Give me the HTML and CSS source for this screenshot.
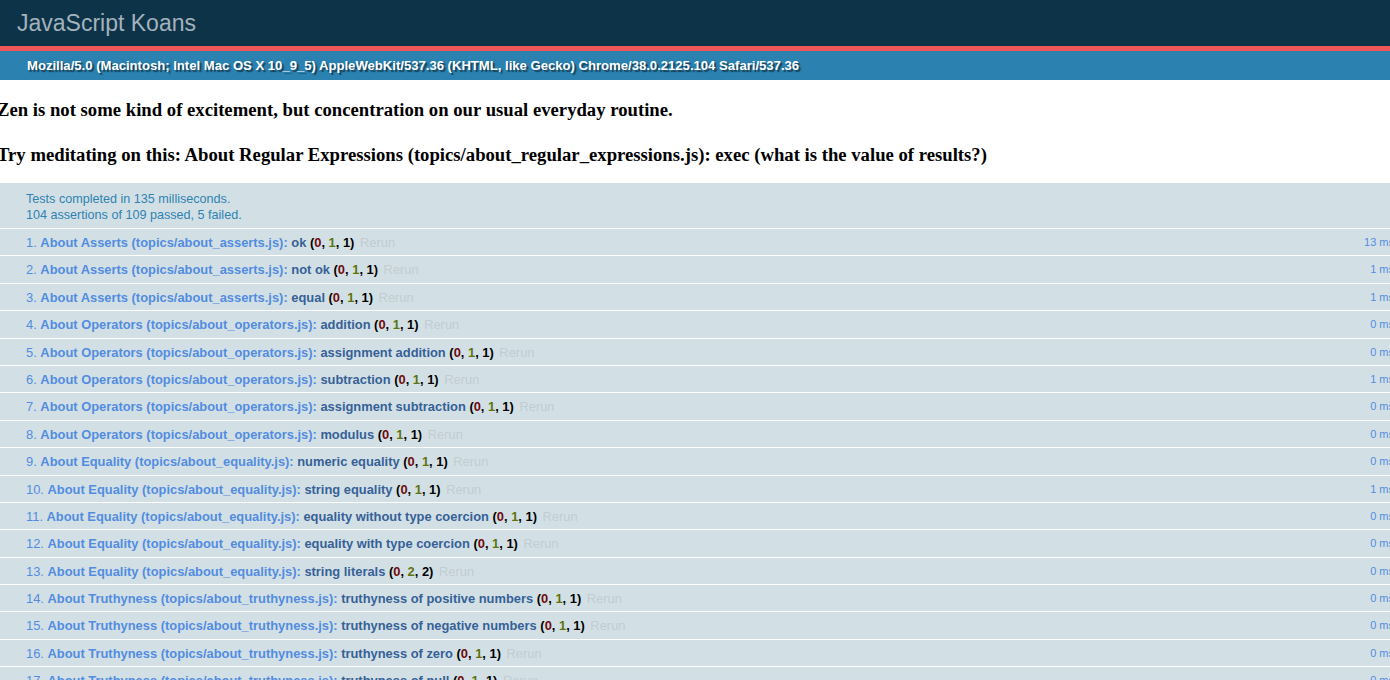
FILE: index.html
```html
<!DOCTYPE html>
<html>
<head>
<meta charset="utf-8">
<title>JavaScript Koans</title>
<link rel="stylesheet" href="styles.css">
</head>
<body>
<div class="page">
  <h1 class="header">JavaScript Koans</h1>
  <div class="banner"></div>
  <div class="user-agent">Mozilla/5.0 (Macintosh; Intel Mac OS X 10_9_5) AppleWebKit/537.36 (KHTML, like Gecko) Chrome/38.0.2125.104 Safari/537.36</div>
  <h2 class="zen">Zen is not some kind of excitement, but concentration on our usual everyday routine.</h2>
  <h2 class="meditate">Try meditating on this: About Regular Expressions (topics/about_regular_expressions.js): exec (what is the value of results?)</h2>
  <p class="result">Tests completed in 135 milliseconds.<br>104 assertions of 109 passed, 5 failed.</p>
  <ol class="tests">
    <li class="pass"><strong><span class="module">About Asserts (topics/about_asserts.js)</span>: <span class="name">ok</span> <b class="counts">(<b class="failed">0</b>, <b class="passed">1</b>, 1)</b></strong> <a class="rerun" href="#">Rerun</a><span class="runtime">13 ms</span></li>
    <li class="pass"><strong><span class="module">About Asserts (topics/about_asserts.js)</span>: <span class="name">not ok</span> <b class="counts">(<b class="failed">0</b>, <b class="passed">1</b>, 1)</b></strong> <a class="rerun" href="#">Rerun</a><span class="runtime">1 ms</span></li>
    <li class="pass"><strong><span class="module">About Asserts (topics/about_asserts.js)</span>: <span class="name">equal</span> <b class="counts">(<b class="failed">0</b>, <b class="passed">1</b>, 1)</b></strong> <a class="rerun" href="#">Rerun</a><span class="runtime">1 ms</span></li>
    <li class="pass"><strong><span class="module">About Operators (topics/about_operators.js)</span>: <span class="name">addition</span> <b class="counts">(<b class="failed">0</b>, <b class="passed">1</b>, 1)</b></strong> <a class="rerun" href="#">Rerun</a><span class="runtime">0 ms</span></li>
    <li class="pass"><strong><span class="module">About Operators (topics/about_operators.js)</span>: <span class="name">assignment addition</span> <b class="counts">(<b class="failed">0</b>, <b class="passed">1</b>, 1)</b></strong> <a class="rerun" href="#">Rerun</a><span class="runtime">0 ms</span></li>
    <li class="pass"><strong><span class="module">About Operators (topics/about_operators.js)</span>: <span class="name">subtraction</span> <b class="counts">(<b class="failed">0</b>, <b class="passed">1</b>, 1)</b></strong> <a class="rerun" href="#">Rerun</a><span class="runtime">1 ms</span></li>
    <li class="pass"><strong><span class="module">About Operators (topics/about_operators.js)</span>: <span class="name">assignment subtraction</span> <b class="counts">(<b class="failed">0</b>, <b class="passed">1</b>, 1)</b></strong> <a class="rerun" href="#">Rerun</a><span class="runtime">0 ms</span></li>
    <li class="pass"><strong><span class="module">About Operators (topics/about_operators.js)</span>: <span class="name">modulus</span> <b class="counts">(<b class="failed">0</b>, <b class="passed">1</b>, 1)</b></strong> <a class="rerun" href="#">Rerun</a><span class="runtime">0 ms</span></li>
    <li class="pass"><strong><span class="module">About Equality (topics/about_equality.js)</span>: <span class="name">numeric equality</span> <b class="counts">(<b class="failed">0</b>, <b class="passed">1</b>, 1)</b></strong> <a class="rerun" href="#">Rerun</a><span class="runtime">0 ms</span></li>
    <li class="pass"><strong><span class="module">About Equality (topics/about_equality.js)</span>: <span class="name">string equality</span> <b class="counts">(<b class="failed">0</b>, <b class="passed">1</b>, 1)</b></strong> <a class="rerun" href="#">Rerun</a><span class="runtime">1 ms</span></li>
    <li class="pass"><strong><span class="module">About Equality (topics/about_equality.js)</span>: <span class="name">equality without type coercion</span> <b class="counts">(<b class="failed">0</b>, <b class="passed">1</b>, 1)</b></strong> <a class="rerun" href="#">Rerun</a><span class="runtime">0 ms</span></li>
    <li class="pass"><strong><span class="module">About Equality (topics/about_equality.js)</span>: <span class="name">equality with type coercion</span> <b class="counts">(<b class="failed">0</b>, <b class="passed">1</b>, 1)</b></strong> <a class="rerun" href="#">Rerun</a><span class="runtime">0 ms</span></li>
    <li class="pass"><strong><span class="module">About Equality (topics/about_equality.js)</span>: <span class="name">string literals</span> <b class="counts">(<b class="failed">0</b>, <b class="passed">2</b>, 2)</b></strong> <a class="rerun" href="#">Rerun</a><span class="runtime">0 ms</span></li>
    <li class="pass"><strong><span class="module">About Truthyness (topics/about_truthyness.js)</span>: <span class="name">truthyness of positive numbers</span> <b class="counts">(<b class="failed">0</b>, <b class="passed">1</b>, 1)</b></strong> <a class="rerun" href="#">Rerun</a><span class="runtime">0 ms</span></li>
    <li class="pass"><strong><span class="module">About Truthyness (topics/about_truthyness.js)</span>: <span class="name">truthyness of negative numbers</span> <b class="counts">(<b class="failed">0</b>, <b class="passed">1</b>, 1)</b></strong> <a class="rerun" href="#">Rerun</a><span class="runtime">0 ms</span></li>
    <li class="pass"><strong><span class="module">About Truthyness (topics/about_truthyness.js)</span>: <span class="name">truthyness of zero</span> <b class="counts">(<b class="failed">0</b>, <b class="passed">1</b>, 1)</b></strong> <a class="rerun" href="#">Rerun</a><span class="runtime">0 ms</span></li>
    <li class="pass"><strong><span class="module">About Truthyness (topics/about_truthyness.js)</span>: <span class="name">truthyness of null</span> <b class="counts">(<b class="failed">0</b>, <b class="passed">1</b>, 1)</b></strong> <a class="rerun" href="#">Rerun</a><span class="runtime">0 ms</span></li>
  </ol>
</div>
</body>
</html>
```
FILE: styles.css
```css
html, body {
  margin: 0;
  padding: 0;
  overflow: hidden;
  background: #fff;
}

.page {
  width: 1401px;
  font-family: "Liberation Sans", Arial, sans-serif;
}

.header {
  margin: 0;
  height: 46px;
  box-sizing: border-box;
  padding: 11px 0 0 17px;
  font-size: 23px;
  line-height: 24px;
  font-weight: normal;
  color: #a3b2bb;
  background: #0d3349;
}

.banner {
  height: 5px;
  background: #ee5757;
}

.user-agent {
  height: 29px;
  box-sizing: border-box;
  padding: 7px 0 0 27px;
  font-size: 13.1px;
  line-height: 16px;
  font-weight: bold;
  color: #fff;
  background: #2b81af;
  text-shadow: rgba(0, 0, 0, 0.5) 2px 2px 1px;
}

.zen, .meditate {
  font-family: "Liberation Serif", "Times New Roman", serif;
  font-size: 18.7px;
  line-height: 22px;
  font-weight: bold;
  color: #000;
  margin: 0 0 0 -3px;
}

.zen {
  margin-top: 19px;
}

.meditate {
  margin-top: 23px;
  margin-bottom: 17px;
}

.result {
  margin: 0;
  height: 46px;
  box-sizing: border-box;
  padding: 8px 0 0 26px;
  font-size: 12.6px;
  line-height: 16px;
  color: #3082b0;
  background: #d2e0e6;
  border-bottom: 1px solid #fff;
}

.tests {
  margin: 0;
  padding: 0;
  list-style-position: inside;
  font-size: 12.9px;
}

.tests li {
  padding: 6px 7px 5.4px 26px;
  line-height: 15px;
  border-bottom: 1px solid #fff;
  color: #528ce0;
  background: #d2e0e6;
}

.tests strong {
  font-weight: bold;
}

.module {
  color: #528ce0;
}

.name {
  color: #366097;
}

.counts {
  color: #000;
}

.failed {
  color: #710909;
}

.passed {
  color: #5e740b;
}

.rerun {
  padding: 0 2px;
  color: #c2ccd1;
  text-decoration: none;
  font-weight: normal;
}

.runtime {
  float: right;
  font-size: 11px;
  color: #528ce0;
}
```
